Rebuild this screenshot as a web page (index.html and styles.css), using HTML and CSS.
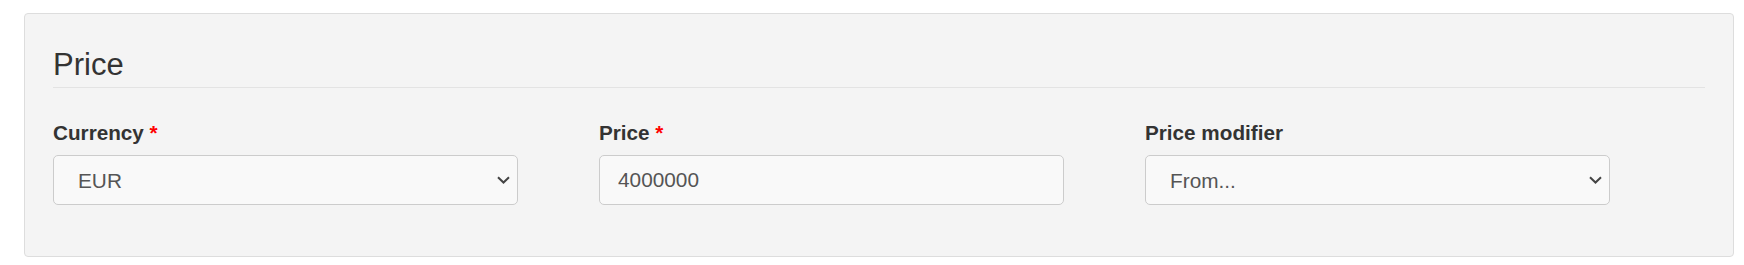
FILE: index.html
```html
<!DOCTYPE html>
<html lang="en">
<head>
<meta charset="utf-8">
<title>Price</title>
<link rel="stylesheet" href="styles.css">
</head>
<body>
<div class="panel">
  <h2 class="panel-title">Price</h2>
  <div class="row">
    <div class="field">
      <label class="field-label">Currency <span class="req">*</span></label>
      <div class="select-wrap">
        <select class="control select">
          <option>EUR</option>
        </select>
        <svg class="chev" width="13" height="8" viewBox="0 0 13 8"><path d="M1 1.2 L6.5 6.5 L12 1.2" fill="none" stroke="#444" stroke-width="2"/></svg>
      </div>
    </div>
    <div class="field">
      <label class="field-label">Price <span class="req">*</span></label>
      <input class="control input" type="text" value="4000000">
    </div>
    <div class="field">
      <label class="field-label">Price modifier</label>
      <div class="select-wrap">
        <select class="control select">
          <option>From...</option>
        </select>
        <svg class="chev" width="13" height="8" viewBox="0 0 13 8"><path d="M1 1.2 L6.5 6.5 L12 1.2" fill="none" stroke="#444" stroke-width="2"/></svg>
      </div>
    </div>
  </div>
</div>
</body>
</html>
```

FILE: styles.css
```css
html, body {
  margin: 0;
  padding: 0;
  background: #ffffff;
  font-family: "Liberation Sans", Arial, sans-serif;
  color: #333333;
}

.panel {
  margin: 13px 10px 0 24px;
  border: 1px solid #dddddd;
  border-radius: 4px;
  background: #f4f4f4;
  padding: 34px 28px 51px 28px;
}

.panel-title {
  margin: 0;
  font-size: 31px;
  line-height: 33px;
  font-weight: normal;
  color: #333333;
  padding-bottom: 6px;
  border-bottom: 1px solid #e3e3e3;
}

.row {
  display: grid;
  grid-template-columns: repeat(3, 465px);
  column-gap: 81px;
  margin-top: 31px;
}

.field {
  display: flex;
  flex-direction: column;
}

.field-label {
  font-size: 20.7px;
  line-height: 28px;
  font-weight: bold;
  color: #333333;
  margin-bottom: 8px;
}

.req {
  color: #ff0000;
}

.control {
  box-sizing: border-box;
  width: 100%;
  height: 50px;
  margin: 0;
  border: 1px solid #cccccc;
  border-radius: 5px;
  background: #f9f9f9;
  font-family: "Liberation Sans", Arial, sans-serif;
  font-size: 20.8px;
  color: #555555;
  outline: none;
}

.input {
  padding: 0 18px;
}

.select-wrap {
  position: relative;
}

.select {
  -webkit-appearance: none;
  appearance: none;
  padding: 0 30px 0 24px;
}

.chev {
  position: absolute;
  right: 8px;
  top: 21px;
  pointer-events: none;
}
```
